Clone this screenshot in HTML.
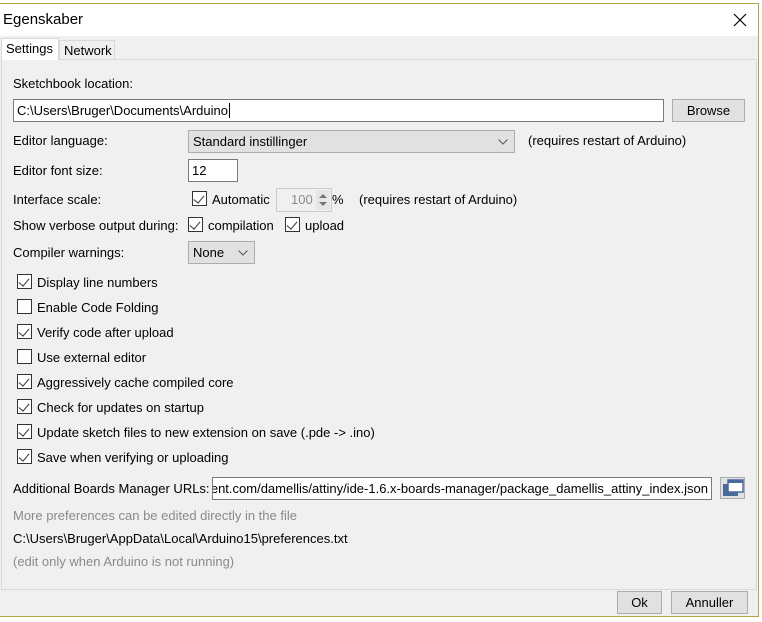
<!DOCTYPE html>
<html><head><meta charset="utf-8"><style>
*{margin:0;padding:0;box-sizing:border-box}
body{width:762px;height:622px;background:#fff;font-family:"Liberation Sans",sans-serif;font-size:13px;color:#000;position:relative;overflow:hidden}
.a{position:absolute;white-space:nowrap;line-height:16px}
.win{position:absolute;left:0;top:3px;width:759px;height:614px;border-top:1px solid #b0a840;border-right:1px solid #b0a840;border-bottom:1px solid #b0a840;background:#f0f0f0}
.tb{position:absolute;left:0;top:0;width:100%;height:32px;background:#fff}
.panel{position:absolute;left:1px;top:55px;width:756px;height:531px;border:1px solid #d9d9d9;background:#f0f0f0}
.inp{position:absolute;background:#fff;border:1px solid #7a7a7a;height:23px;line-height:21px;padding-left:3px;overflow:hidden;white-space:nowrap}
.btn{position:absolute;background:#e1e1e1;border:1px solid #adadad;text-align:center;height:23px;line-height:21px}
.cb{position:absolute;width:15px;height:15px;border:1px solid #333;background:#fff}
.cb.c::after{content:"";position:absolute;left:3px;top:1px;width:5px;height:9px;border-right:1.3px solid #333;border-bottom:1.3px solid #333;transform:rotate(40deg)}
.g{color:#8a8a8a}
.dd{position:absolute;background:#e1e1e1;border:1px solid #adadad;height:23px;line-height:21px;padding-left:4px}
.dd svg{position:absolute;right:6px;top:8px}
</style></head><body>
<div class="win">
<div class="tb"></div>
<div class="a" style="left:3px;top:8px;font-size:15px">Egenskaber</div>
<svg class="a" style="left:733px;top:9px" width="14" height="14"><path d="M1 1L13 13M13 1L1 13" stroke="#000" stroke-width="1.2"/></svg>
<div class="panel"></div>
<div class="a" style="left:1px;top:34px;width:58px;height:22px;background:#fff;border:1px solid #d9d9d9;border-bottom:none"></div>
<div class="a" style="left:59px;top:36px;width:56px;height:19px;border:1px solid #d9d9d9;border-bottom:none;background:#f0f0f0"></div>
<div class="a" style="left:6px;top:37px">Settings</div>
<div class="a" style="left:64px;top:39px">Network</div>
</div>

<div class="a" style="left:13px;top:76px">Sketchbook location:</div>
<div class="inp" style="left:13px;top:99px;width:651px">C:\Users\Bruger\Documents\Arduino<span style="border-left:1px solid #000;margin-left:1px"></span></div>
<div class="btn" style="left:672px;top:99px;width:73px">Browse</div>

<div class="a" style="left:13px;top:133px">Editor language:</div>
<div class="dd" style="left:188px;top:130px;width:327px">Standard instillinger<svg width="10" height="6"><path d="M0.5 0.5L5 5L9.5 0.5" fill="none" stroke="#555"/></svg></div>
<div class="a" style="left:528px;top:133px">(requires restart of Arduino)</div>

<div class="a" style="left:13px;top:163px">Editor font size:</div>
<div class="inp" style="left:188px;top:159px;width:50px">12</div>

<div class="a" style="left:13px;top:192px">Interface scale:</div>
<div class="cb c" style="left:192px;top:191px"></div>
<div class="a" style="left:212px;top:192px">Automatic</div>
<div class="a" style="left:276px;top:188px;width:56px;height:24px;border:1px solid #ccc;background:#f0f0f0"></div>
<div class="a g" style="left:291px;top:192px">100</div>
<div class="a" style="left:316px;top:190px;width:14px;height:20px;background:#e6e6e6"></div>
<svg class="a" style="left:318px;top:192px" width="10" height="16"><path d="M1 6L5 2L9 6Z M1 10L5 14L9 10Z" fill="#777"/></svg>
<div class="a" style="left:332px;top:192px">%</div>
<div class="a" style="left:359px;top:192px">(requires restart of Arduino)</div>

<div class="a" style="left:13px;top:218px">Show verbose output during:</div>
<div class="cb c" style="left:188px;top:217px"></div>
<div class="a" style="left:208px;top:218px">compilation</div>
<div class="cb c" style="left:285px;top:217px"></div>
<div class="a" style="left:305px;top:218px">upload</div>

<div class="a" style="left:13px;top:245px">Compiler warnings:</div>
<div class="dd" style="left:188px;top:241px;width:67px">None<svg width="10" height="6"><path d="M0.5 0.5L5 5L9.5 0.5" fill="none" stroke="#555"/></svg></div>

<div class="cb c" style="left:17px;top:274px"></div><div class="a" style="left:37px;top:275px">Display line numbers</div>
<div class="cb" style="left:17px;top:299px"></div><div class="a" style="left:37px;top:300px">Enable Code Folding</div>
<div class="cb c" style="left:17px;top:324px"></div><div class="a" style="left:37px;top:325px">Verify code after upload</div>
<div class="cb" style="left:17px;top:349px"></div><div class="a" style="left:37px;top:350px">Use external editor</div>
<div class="cb c" style="left:17px;top:374px"></div><div class="a" style="left:37px;top:375px">Aggressively cache compiled core</div>
<div class="cb c" style="left:17px;top:399px"></div><div class="a" style="left:37px;top:400px">Check for updates on startup</div>
<div class="cb c" style="left:17px;top:424px"></div><div class="a" style="left:37px;top:425px">Update sketch files to new extension on save (.pde -&gt; .ino)</div>
<div class="cb c" style="left:17px;top:449px"></div><div class="a" style="left:37px;top:450px">Save when verifying or uploading</div>

<div class="a" style="left:13px;top:481px">Additional Boards Manager URLs:</div>
<div class="inp" style="left:212px;top:477px;width:500px;direction:rtl;text-align:left;padding-right:3px"><span style="direction:ltr;unicode-bidi:bidi-override">ent.com/damellis/attiny/ide-1.6.x-boards-manager/package_damellis_attiny_index.json</span></div>
<div class="btn" style="left:720px;top:477px;width:25px;height:22px"></div>
<svg class="a" style="left:722px;top:479px" width="22" height="18"><rect x="1" y="5" width="15" height="12" fill="#4a6a9a"/><rect x="6" y="1" width="15" height="12" fill="#fff" stroke="#4a6a9a" stroke-width="1.5"/><rect x="6" y="1" width="15" height="3" fill="#4a6a9a"/></svg>

<div class="a g" style="left:13px;top:508px">More preferences can be edited directly in the file</div>
<div class="a" style="left:13px;top:531px">C:\Users\Bruger\AppData\Local\Arduino15\preferences.txt</div>
<div class="a g" style="left:13px;top:554px">(edit only when Arduino is not running)</div>

<div class="btn" style="left:617px;top:591px;width:45px">Ok</div>
<div class="btn" style="left:671px;top:591px;width:77px">Annuller</div>
</body></html>
